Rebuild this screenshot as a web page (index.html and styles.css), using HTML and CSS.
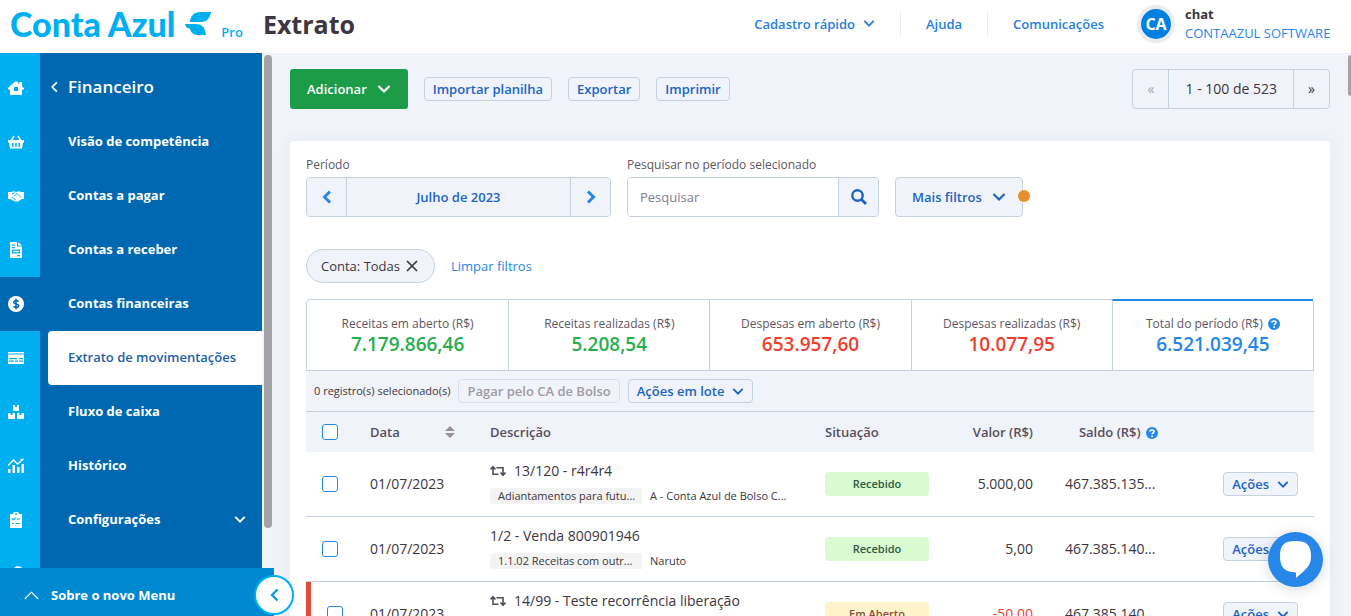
FILE: index.html
```html
<!doctype html>
<html lang="pt-BR">
<head>
	<meta charset="UTF-8">
	<meta name="viewport" content="width=device-width, initial-scale=1">
	<title>Extrato</title>
	<link rel="stylesheet" href="styles.css">
</head>
<body>
	<svg class="sprite" aria-hidden="true">
		<symbol id="down" viewBox="0 0 14 10"><path d="M1.5 2l5.500 5.500L12.500 2" fill="none" stroke="currentColor" stroke-width="2.200"/></symbol>
		<symbol id="help" viewBox="0 0 12 12"><circle cx="6" cy="6" r="6" fill="#2687e9"/><path d="M4 4.600C4 2.500 8 2.500 8 4.600 8 5.900 6.100 5.800 6.100 7.300M6.100 8.400v1.500" fill="none" stroke="#fff" stroke-width="1.600"/></symbol>
		<symbol id="repeat" viewBox="0 0 16 12"><path d="M8.500 9.300H3V3M6.500 2.700H13V9M.5 4.500L3 1.700 5.500 4.500M10.500 7.500L13 10.300 15.500 7.500" fill="none" stroke="#564c5c" stroke-width="1.600"/></symbol>
	</svg>

	<header class="topbar">
		<a class="logo" href="#">
			<span class="logo-name">Conta Azul</span>
			<svg width="26" height="23" viewBox="0 0 26 23"><path d="M5 10C5.500 4 9 0 15 0h11c-1 6-4 10-10 10zM0 12h10c7 0 10 3 11 11h-8c-5 0-7.500-3-8-6.500C2.500 16.500.5 15 0 12z" fill="#00aff0"/></svg>
			<span class="logo-plan">Pro</span>
		</a>
		<h1>Extrato</h1>
		<nav class="topnav">
			<button class="toplink">Cadastro rápido <svg class="ico-s"><use href="#down"/></svg></button>
			<a class="toplink" href="#">Ajuda</a>
			<a class="toplink" href="#">Comunicações</a>
		</nav>
		<div class="user">
			<span class="avatar">CA</span>
			<div class="user-text">
				<strong>chat</strong>
				<a href="#">CONTAAZUL SOFTWARE</a>
			</div>
		</div>
	</header>

	<div class="app">
		<aside class="sidebar">
			<nav class="rail">
				<a href="#" aria-label="Início"><svg viewBox="0 0 16 16"><path d="M0 8l7-6.500h2L11.500 4V2H14v4.500L16 8v1.500h-2V15H2V9.500H0zM6 7v4h4V7z" fill="#fff" fill-rule="evenodd"/></svg></a>
				<a href="#" aria-label="Vendas"><svg viewBox="0 0 16 16"><path d="M0 6h16v2.500h-1L14 14.500H2L1 8.500H0zM4 9v4h1.500V9zM7.200 9v4h1.500V9zM10.500 9v4H12V9z" fill="#fff" fill-rule="evenodd"/><path d="M3 7l3-5M13 7l-3-5" stroke="#fff" stroke-width="1.500"/></svg></a>
				<a href="#" aria-label="Compras"><svg viewBox="0 0 16 16"><path d="M0 4h3l3-.8L8 4l3-.8L13 4h3v7h-2l-4 2.500H7L2 11H0z" fill="#fff"/><path d="M4 6l3-1.500M6 8.500l3-3 4 4M4 9l4 3" fill="none" stroke="#00aff0" stroke-width=".9"/></svg></a>
				<a href="#" aria-label="Notas"><svg viewBox="0 0 16 16"><path d="M2 0h7v4.500h5V16H2zM10.200 0L14 3.500h-3.800zM4 2.500v1.200h3V2.500zM4 5v1.200h3V5zM4 7.500v4h8v-4zM5.300 8.700h5.400v1.600H5.300zM9 13v1.200h3V13z" fill="#fff" fill-rule="evenodd"/></svg></a>
				<a href="#" class="active" aria-label="Financeiro"><svg viewBox="0 0 16 16"><circle cx="8" cy="8" r="8" fill="#fff"/><path d="M10.500 5.500C9.500 4 5.700 4.200 5.700 6.200c0 2.200 5 1.300 5 3.600 0 2-4 2.200-5.200.4M8 2.800v10.400" fill="none" stroke="#0068b0" stroke-width="1.500"/></svg></a>
				<a href="#" aria-label="Banco"><svg viewBox="0 0 16 16"><path d="M0 2h16v1.500H0zM0 4.500h16V14H0zM1 8v1.300h8V8zM11 8v1.300h4V8zM1 10.500v1.300h5v-1.300zM7 10.500v1.300h3v-1.300zM11 10.500v1.300h4v-1.300z" fill="#fff" fill-rule="evenodd"/></svg></a>
				<a href="#" aria-label="Estoque"><svg viewBox="0 0 16 16"><path d="M5 1h2v2h2V1h2v6H5zM0 9h2.500v2h2V9H7v6H0zM9 9h2.500v2h2V9H16v6H9z" fill="#fff"/></svg></a>
				<a href="#" aria-label="Relatórios"><svg viewBox="0 0 16 16"><path d="M0 11h2.500v4H0zM4.500 7H7v8H4.500zM9 9h2.500v6H9zM13.500 6H16v9h-2.500z" fill="#fff"/><path d="M0 7.500L5.500 2l4 4L15.500 1M12.500 1.500h3" fill="none" stroke="#fff" stroke-width="1.400"/></svg></a>
				<a href="#" aria-label="Cadastros"><svg viewBox="0 0 16 16"><path d="M2 2h3l1-2h4l1 2h3v14H2zM7 1.300v1.500h2V1.300z" fill="#fff" fill-rule="evenodd"/><path d="M4 6.500l1.500 1.300L7.500 5.500M8.500 7h3.500M4 11.500h2M7.500 11.500H12" fill="none" stroke="#00aff0" stroke-width="1.200"/></svg></a>
				<a href="#" aria-label="Configurações"><svg viewBox="0 0 16 16"><path d="M6 2C8-.5 12-.5 14 2v9H6z" fill="#fff"/></svg></a>
			</nav>
			<nav class="menu">
				<a href="#" class="menu-title"><svg width="7" height="12" viewBox="0 0 6 10"><path d="M5 1L1 5l4 4" fill="none" stroke="#fff" stroke-width="1.500"/></svg>Financeiro</a>
				<a href="#">Visão de competência</a>
				<a href="#">Contas a pagar</a>
				<a href="#">Contas a receber</a>
				<a href="#">Contas financeiras</a>
				<a href="#" class="current">Extrato de movimentações</a>
				<a href="#">Fluxo de caixa</a>
				<a href="#">Histórico</a>
				<a href="#">Configurações <svg class="ico-s"><use href="#down"/></svg></a>
			</nav>
			<div class="menu-scroll"></div>
			<a class="about" href="#"><svg width="15" height="9" viewBox="0 0 15 9"><path d="M.8 8L7.500 1.200 14.200 8" fill="none" stroke="#fff" stroke-width="1.100"/></svg>Sobre o novo Menu</a>
			<button class="collapse" aria-label="Recolher menu"><svg width="9" height="14" viewBox="0 0 9 14"><path d="M7.500 1.500L2 7l5.500 5.500" fill="none" stroke="#0099dd" stroke-width="2.200"/></svg></button>
		</aside>

		<main class="content">
			<div class="toolbar">
				<button class="btn-add">Adicionar <svg class="ico-l"><use href="#down"/></svg></button>
				<button class="btn">Importar planilha</button>
				<button class="btn">Exportar</button>
				<button class="btn">Imprimir</button>
				<div class="pager">
					<button disabled>«</button>
					<span>1 - 100 de 523</span>
					<button>»</button>
				</div>
			</div>

			<section class="card">
				<div class="filters">
					<div>
						<div class="label">Período</div>
						<div class="period">
							<button aria-label="Mês anterior"><svg width="10" height="14" viewBox="0 0 10 14"><path d="M8 1.500L2.500 7 8 12.500" fill="none" stroke="#2687e9" stroke-width="3"/></svg></button>
							<button class="month">Julho de 2023</button>
							<button aria-label="Próximo mês"><svg width="10" height="14" viewBox="0 0 10 14"><path d="M2 1.500L7.500 7 2 12.500" fill="none" stroke="#2687e9" stroke-width="3"/></svg></button>
						</div>
					</div>
					<div>
						<label class="label" for="search">Pesquisar no período selecionado</label>
						<div class="search">
							<input type="text" id="search" placeholder="Pesquisar">
							<button aria-label="Pesquisar"><svg width="16" height="16" viewBox="0 0 16 16"><circle cx="6.500" cy="6.500" r="5.200" fill="none" stroke="#1c64c4" stroke-width="2.400"/><path d="M10.300 10.300l4.700 4.700" stroke="#1c64c4" stroke-width="2.800"/></svg></button>
						</div>
					</div>
					<button class="more">Mais filtros <svg class="ico-l"><use href="#down"/></svg><span class="dot"></span></button>
				</div>

				<div class="chips">
					<button class="chip">Conta: Todas <svg width="12" height="12" viewBox="0 0 12 12"><path d="M1 1l10 10M11 1L1 11" stroke="#3b3640" stroke-width="1.700"/></svg></button>
					<a href="#">Limpar filtros</a>
				</div>

				<div class="totals">
					<div class="green"><span>Receitas em aberto (R$)</span><b>7.179.866,46</b></div>
					<div class="green"><span>Receitas realizadas (R$)</span><b>5.208,54</b></div>
					<div class="red"><span>Despesas em aberto (R$)</span><b>653.957,60</b></div>
					<div class="red"><span>Despesas realizadas (R$)</span><b>10.077,95</b></div>
					<div class="blue"><span>Total do período (R$) <svg class="help"><use href="#help"/></svg></span><b>6.521.039,45</b></div>
				</div>

				<div class="batch">
					<span>0 registro(s) selecionado(s)</span>
					<button class="btn" disabled>Pagar pelo CA de Bolso</button>
					<button class="btn">Ações em lote <svg class="ico-s"><use href="#down"/></svg></button>
				</div>

				<table class="entries">
					<colgroup><col class="c-check"><col class="c-date"><col><col class="c-status"><col class="c-value"><col class="c-balance"><col class="c-actions"></colgroup>
					<thead>
						<tr>
							<th><input type="checkbox" aria-label="Selecionar todos"></th>
							<th><div class="sort">Data <svg width="10" height="12" viewBox="0 0 10 12"><path d="M0 5l5-5 5 5zM0 7h10l-5 5z" fill="#988f99"/></svg></div></th>
							<th>Descrição</th>
							<th>Situação</th>
							<th class="num">Valor (R$)</th>
							<th class="num">Saldo (R$) <svg class="help"><use href="#help"/></svg></th>
							<th></th>
						</tr>
					</thead>
					<tbody>
						<tr>
							<td><input type="checkbox" aria-label="Selecionar 13/120 - r4r4r4"></td>
							<td>01/07/2023</td>
							<td class="info">
								<div class="desc"><svg class="repeat"><use href="#repeat"/></svg>13/120 - r4r4r4</div>
								<div class="meta"><span class="tag">Adiantamentos para futu...</span><span>A - Conta Azul de Bolso C...</span></div>
							</td>
							<td><span class="status">Recebido</span></td>
							<td class="num">5.000,00</td>
							<td>467.385.135...</td>
							<td class="num"><button class="btn">Ações <svg class="ico-s"><use href="#down"/></svg></button></td>
						</tr>
						<tr>
							<td><input type="checkbox" aria-label="Selecionar 1/2 - Venda 800901946"></td>
							<td>01/07/2023</td>
							<td class="info">
								<div class="desc">1/2 - Venda 800901946</div>
								<div class="meta"><span class="tag">1.1.02 Receitas com outr...</span><span>Naruto</span></div>
							</td>
							<td><span class="status">Recebido</span></td>
							<td class="num">5,00</td>
							<td>467.385.140...</td>
							<td class="num"><button class="btn">Ações <svg class="ico-s"><use href="#down"/></svg></button></td>
						</tr>
						<tr class="late">
							<td><input type="checkbox" aria-label="Selecionar 14/99 - Teste recorrência liberação"></td>
							<td>01/07/2023</td>
							<td class="info">
								<div class="desc"><svg class="repeat"><use href="#repeat"/></svg>14/99 - Teste recorrência liberação</div>
								<div class="meta"></div>
							</td>
							<td><span class="status open">Em Aberto</span></td>
							<td class="num negative">-50,00</td>
							<td>467.385.140...</td>
							<td class="num"><button class="btn">Ações <svg class="ico-s"><use href="#down"/></svg></button></td>
						</tr>
					</tbody>
				</table>
			</section>
		</main>
		<div class="page-scroll"></div>
	</div>

	<button class="chat" aria-label="Abrir chat"><svg width="33" height="37" viewBox="0 0 33 37"><path d="M16.500 0C28 0 32 4 32 15c0 8-3 11-7 15l-8 7v-5.500C5 31 1 26 1 15 1 4 5 0 16.500 0z" fill="#fff"/></svg></button>
</body>
</html>
```

FILE: styles.css
```css
* {
	box-sizing: border-box;
}
body {
	margin: 0;
	height: 100vh;
	display: flex;
	flex-direction: column;
	overflow: hidden;
	background: #f0f3f9;
	color: #3b3640;
	font: 14px/20px "Open Sans", "Noto Sans", sans-serif;
}
button, input {
	font: inherit;
	color: inherit;
}
button {
	margin: 0;
	padding: 0;
	border: 0;
	background: none;
	display: inline-flex;
	align-items: center;
	justify-content: center;
}
a {
	color: #2687e9;
	text-decoration: none;
}
svg {
	flex: none;
}
.sprite {
	position: absolute;
	width: 0;
	height: 0;
}
.ico-s {
	width: 12px;
	height: 9px;
}
.ico-l {
	width: 14px;
	height: 10px;
}

/* top bar */
.topbar {
	flex: none;
	height: 53px;
	display: flex;
	align-items: center;
	padding: 0 17px 6px 10px;
	background: #fff;
}
.logo {
	display: flex;
	align-items: center;
	gap: 10px;
	color: #00aff0;
}
.logo-name {
	font: 900 34px/40px Lato, sans-serif;
}
.logo-plan {
	align-self: flex-end;
	font-size: 13px;
	line-height: 24px;
	font-weight: 600;
}
h1 {
	margin: 0 0 0 20px;
	font-size: 25px;
	line-height: 32px;
	font-weight: 700;
}
.topnav {
	margin-left: auto;
	display: flex;
	align-items: center;
}
.toplink {
	height: 24px;
	padding: 0 25px;
	gap: 8px;
	color: #2680e0;
	font-size: 13px;
	line-height: 24px;
	font-weight: 600;
}
.toplink + .toplink {
	border-left: 1px solid #e9eef4;
}
.user {
	display: flex;
	align-items: center;
	gap: 10px;
	margin-left: 8px;
}
.avatar {
	width: 38px;
	height: 38px;
	border: 4px solid #ececec;
	border-radius: 50%;
	background: #0080e3;
	color: #fff;
	font-size: 16px;
	line-height: 30px;
	font-weight: 700;
	text-align: center;
}
.user-text {
	width: 149px;
	display: flex;
	flex-direction: column;
	font-size: 13px;
	line-height: 19px;
}

/* side menu */
.app {
	flex: 1;
	min-height: 0;
	display: flex;
}
.sidebar {
	position: relative;
	flex: none;
	width: 274px;
	display: flex;
}
.rail {
	width: 40px;
	padding-top: 8px;
	overflow: hidden;
	background: #00aff0;
}
.rail a {
	height: 54px;
	padding-left: 8px;
	display: flex;
	align-items: center;
}
.rail svg {
	width: 16px;
	height: 16px;
}
.rail .active {
	background: #0068b0;
}
.menu {
	width: 222px;
	padding: 8px 0 0 8px;
	background: #0068b0;
}
.menu a {
	height: 54px;
	padding: 0 16px 2px 20px;
	display: flex;
	align-items: center;
	justify-content: space-between;
	color: #fff;
	font-size: 13px;
	font-weight: 700;
}
.menu .menu-title {
	padding-left: 3px;
	justify-content: flex-start;
	gap: 10px;
	font-size: 17px;
	font-weight: 600;
}
.menu .current {
	border-radius: 4px 0 0 4px;
	background: #fff;
	color: #1a62a8;
	font-weight: 600;
}
.menu-scroll {
	width: 8px;
	height: 473px;
	margin: 2px 0 0 2px;
	border-radius: 4px;
	background: #a3a3a5;
}
.about {
	position: absolute;
	left: 0;
	right: 0;
	bottom: 0;
	height: 48px;
	padding: 6px 0 0 24px;
	display: flex;
	align-items: center;
	gap: 12px;
	background: #0088d0;
	color: #fff;
	font-size: 13px;
	font-weight: 700;
}
.collapse {
	position: absolute;
	right: -20px;
	bottom: 1px;
	width: 40px;
	height: 40px;
	border: 2px solid #00aff0;
	border-radius: 50%;
	background: #fff;
}

/* content */
.content {
	flex: 1;
	min-width: 0;
	padding: 16px 18px 0 16px;
}
.page-scroll {
	flex: none;
	width: 3px;
	height: 41px;
	margin-top: 2px;
	border-radius: 3px 0 0 3px;
	background: #a3a3a5;
}
.toolbar {
	display: flex;
	align-items: center;
	gap: 16px;
}
.btn {
	height: 24px;
	padding: 0 8px;
	gap: 8px;
	border: 1px solid #c6d1e0;
	border-radius: 4px;
	background: #f0f3f9;
	color: #1c64c4;
	font-size: 13px;
	line-height: 20px;
	font-weight: 600;
}
.btn:disabled {
	border-color: #dadfe9;
	color: #a09aa5;
}
.btn-add {
	height: 40px;
	padding: 0 17px;
	gap: 10px;
	border-radius: 3px;
	background: #1c9c46;
	color: #fff;
	font-size: 13px;
	font-weight: 600;
}
.pager {
	height: 40px;
	margin-left: auto;
	display: flex;
	border: 1px solid #c6d1e0;
	border-radius: 4px;
}
.pager button {
	width: 35px;
}
.pager button:disabled {
	color: #a8a5b0;
}
.pager span {
	padding: 0 16px;
	border: solid #c6d1e0;
	border-width: 0 1px;
	line-height: 38px;
}
.card {
	margin-top: 32px;
	padding: 16px;
	border-radius: 4px;
	background: #fff;
	box-shadow: 0 0 16px rgba(60, 90, 140, .06);
}
.filters {
	display: flex;
	align-items: flex-end;
	gap: 16px;
}
.label {
	display: block;
	margin-bottom: 5px;
	color: #5c5763;
	font-size: 12px;
	line-height: 15px;
}
.period, .search {
	display: flex;
	height: 40px;
	border: 1px solid #c6d1e0;
	border-radius: 4px;
	overflow: hidden;
}
.period button {
	width: 39px;
	background: #f0f3f9;
}
.period .month {
	width: 225px;
	border: solid #c6d1e0;
	border-width: 0 1px;
	color: #1c64c4;
	font-size: 13px;
	font-weight: 600;
}
.search input {
	width: 210px;
	padding: 0 12px;
	border: 0;
	background: #fff;
	font-size: 13px;
}
.search input::placeholder {
	color: #827d8b;
}
.search button {
	width: 40px;
	border-left: 1px solid #c6d1e0;
	background: #f0f3f9;
}
.more {
	position: relative;
	height: 40px;
	padding: 0 16px;
	gap: 10px;
	border: 1px solid #c6d1e0;
	border-radius: 4px;
	background: #f0f3f9;
	color: #1c64c4;
	font-size: 13px;
	font-weight: 600;
}
.dot {
	position: absolute;
	right: -8px;
	top: 12px;
	width: 12px;
	height: 12px;
	border-radius: 50%;
	background: #e6902d;
}
.chips {
	margin: 32px 0 16px;
	display: flex;
	align-items: center;
	gap: 16px;
	font-size: 13px;
}
.chip {
	height: 34px;
	padding: 0 16px 0 14px;
	gap: 6px;
	border: 1px solid #c6d1e0;
	border-radius: 17px;
	background: #f0f3f9;
}
.totals {
	height: 72px;
	display: grid;
	grid-template-columns: repeat(5, 1fr);
	border: 1px solid #c6d1e0;
	border-radius: 4px 4px 0 0;
}
.totals div {
	padding-top: 15px;
	display: flex;
	flex-direction: column;
	align-items: center;
}
.totals div + div {
	border-left: 1px solid #c6d1e0;
}
.totals span {
	color: #5c5763;
	font-size: 12px;
	line-height: 18px;
}
.totals b {
	font-size: 19px;
	line-height: 23px;
	font-weight: 600;
}
.green b {
	color: #27ae4f;
}
.red b {
	color: #f03e2e;
}
.blue b {
	color: #2687e9;
}
.totals .blue {
	margin-top: -1px;
	padding-top: 14px;
	border-top: 2px solid #2687e9;
}
.help {
	width: 12px;
	height: 12px;
	margin-left: 2px;
	vertical-align: -2px;
}
.batch {
	height: 40px;
	padding: 0 8px;
	display: flex;
	align-items: center;
	gap: 8px;
	background: #f0f3f9;
	font-size: 11px;
}

/* entries table */
.entries {
	width: 100%;
	table-layout: fixed;
	border-spacing: 0;
}
.c-check { width: 48px; }
.c-date { width: 120px; }
.c-status { width: 136px; }
.c-value { width: 104px; }
.c-balance { width: 125px; }
.c-actions { width: 140px; }
.entries th {
	height: 41px;
	padding: 0 16px;
	border-top: 1px solid #c6d1e0;
	background: #f0f3f9;
	color: #564f5c;
	font-size: 13px;
	font-weight: 600;
	text-align: left;
}
.entries td {
	height: 65px;
	padding: 0 16px;
	border-bottom: 1px solid #c6d1e0;
}
.entries .num {
	text-align: right;
}
.entries .negative {
	color: #f03e2e;
}
.entries .late td:first-child {
	border-left: 5px solid #e04b3c;
}
.entries .btn {
	vertical-align: middle;
}
.sort {
	display: flex;
	align-items: center;
	justify-content: space-between;
	padding-right: 3px;
}
input[type="checkbox"] {
	appearance: none;
	display: block;
	width: 16px;
	height: 16px;
	margin: 0;
	border: 1px solid #2687e9;
	border-radius: 3px;
	background: #fff;
}
.entries .info {
	padding-bottom: 3px;
}
.desc {
	display: flex;
	align-items: center;
	gap: 8px;
	white-space: nowrap;
}
.repeat {
	width: 16px;
	height: 12px;
}
.meta {
	display: flex;
	gap: 8px;
	height: 16px;
	margin-top: 7px;
	font-size: 11px;
	line-height: 16px;
	white-space: nowrap;
}
.tag {
	width: 152px;
	padding-left: 8px;
	border-radius: 4px 0 0 4px;
	background: #f3f3f3;
}
.status {
	display: block;
	height: 24px;
	border-radius: 4px;
	background: #dafbd1;
	color: #2f5a45;
	font-size: 11px;
	line-height: 24px;
	font-weight: 600;
	text-align: center;
}
.status.open {
	background: #fff3cb;
	color: #85503a;
}

/* support chat */
.chat {
	position: fixed;
	right: 28px;
	bottom: 29px;
	width: 55px;
	height: 55px;
	border-radius: 50%;
	background: #2687e9;
	box-shadow: 0 2px 14px rgba(0, 0, 0, .16);
}
```
